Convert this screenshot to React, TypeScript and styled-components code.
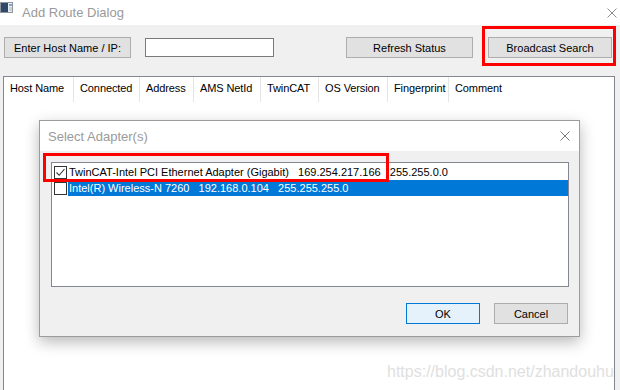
import React from "react";
import styled, { createGlobalStyle } from "styled-components";

const Global = createGlobalStyle`
  html, body { margin: 0; padding: 0; background: #ffffff; }
  body { font-family: "Liberation Sans", Arial, sans-serif; }
  * { box-sizing: border-box; }
`;

const Window = styled.div`
  position: relative;
  width: 620px;
  height: 390px;
  overflow: hidden;
  background: #f0f0f0;
  display: flex;
  flex-direction: column;
  font-family: "Liberation Sans", Arial, sans-serif;
  font-size: 11px;
  color: #000;
`;

const TitleBar = styled.div`
  height: 25px;
  flex-shrink: 0;
  background: #ffffff;
  display: flex;
  align-items: center;
`;

const AppIconSvg = styled.svg`
  align-self: flex-start;
  margin-top: 2px;
  flex-shrink: 0;
`;

const TitleText = styled.span`
  margin-left: 9px;
  font-size: 13px;
  color: #9a9a9a;
`;

const CloseIcon = styled.svg<{ $mr: number }>`
  margin-left: auto;
  margin-right: ${(p) => p.$mr}px;
  flex-shrink: 0;
`;

const Toolbar = styled.div`
  display: flex;
  align-items: center;
  height: 21px;
  margin-top: 12px;
  padding: 0 8px 0 4px;
  flex-shrink: 0;
`;

const Button = styled.button<{ $w: number; $primary?: boolean }>`
  width: ${(p) => p.$w}px;
  height: 21px;
  padding: 0;
  margin: 0;
  background: ${(p) => (p.$primary ? "#e5f1fb" : "#e1e1e1")};
  border: 1px solid ${(p) => (p.$primary ? "#0078d7" : "#adadad")};
  font-family: "Liberation Sans", Arial, sans-serif;
  font-size: 11px;
  color: #000;
  flex-shrink: 0;
`;

const TextInput = styled.input`
  width: 129px;
  height: 19px;
  margin-left: 14px;
  border: 1px solid #7a7a7a;
  background: #fff;
  padding: 0;
`;

const Spacer = styled.div`
  flex: 1;
`;

const Gap = styled.div<{ $w: number }>`
  width: ${(p) => p.$w}px;
  flex-shrink: 0;
`;

const Annotated = styled.div`
  position: relative;
  display: flex;
`;

const RedFrame = styled.div<{ $l: number; $t: number; $w: number; $h: number }>`
  position: absolute;
  left: ${(p) => p.$l}px;
  top: ${(p) => p.$t}px;
  width: ${(p) => p.$w}px;
  height: ${(p) => p.$h}px;
  border: 3px solid #ff0000;
  pointer-events: none;
  z-index: 5;
`;

const ListView = styled.div`
  margin: 18px 5px -4px 3px;
  flex: 1;
  background: #ffffff;
  border: 1px solid #828790;
  display: flex;
  flex-direction: column;
`;

const HeaderRow = styled.div`
  display: flex;
  height: 25px;
  background: #ffffff;
`;

const HeaderCell = styled.div<{ $w?: number; $last?: boolean }>`
  ${(p) => (p.$w ? `width: ${p.$w}px;` : "flex: 1;")}
  flex-shrink: 0;
  height: 25px;
  line-height: 23px;
  padding-left: 6px;
  border-right: ${(p) => (p.$last ? "none" : "1px solid #e5e5e5")};
  white-space: nowrap;
  letter-spacing: -0.1px;
`;

const Dialog = styled.div`
  position: absolute;
  left: 39px;
  top: 120px;
  width: 541px;
  height: 217px;
  border: 1px solid #9c9c9c;
  background: #f0f0f0;
  box-shadow: 0 5px 14px rgba(0, 0, 0, 0.28);
  display: flex;
  flex-direction: column;
  z-index: 3;
`;

const DialogTitle = styled.div`
  height: 30px;
  background: #ffffff;
  display: flex;
  align-items: center;
  padding-left: 8px;
  flex-shrink: 0;
`;

const DialogTitleText = styled.span`
  font-size: 13px;
  color: #9a9a9a;
`;

const DialogBody = styled.div`
  flex: 1;
  display: flex;
  flex-direction: column;
  padding: 11px 10px 12px 11px;
`;

const ListBox = styled.div`
  height: 125px;
  border: 1px solid #828790;
  background: #ffffff;
  padding-top: 1px;
  display: flex;
  flex-direction: column;
`;

const ItemRow = styled.div`
  display: flex;
  align-items: center;
  height: 16px;
  padding-left: 2px;
`;

const Check = styled.span`
  width: 13px;
  height: 13px;
  border: 1px solid #333333;
  background: #ffffff;
  flex-shrink: 0;
  display: flex;
  align-items: center;
  justify-content: center;
`;

const ItemLabel = styled.span<{ $selected?: boolean }>`
  flex: 1;
  height: 16px;
  line-height: 16px;
  margin-left: 1px;
  padding-left: 1px;
  white-space: pre;
  font-size: 11px;
  background: ${(p) => (p.$selected ? "#0078d7" : "transparent")};
  color: ${(p) => (p.$selected ? "#ffffff" : "#000000")};
`;

const ButtonRow = styled.div`
  display: flex;
  justify-content: flex-end;
  gap: 14px;
  margin-top: 16px;
  padding-right: 1px;
`;

const Watermark = styled.div`
  position: absolute;
  left: 387px;
  top: 364px;
  font-family: "Liberation Sans", Arial, sans-serif;
  font-size: 16px;
  line-height: 16px;
  color: #e0e0e0;
  white-space: nowrap;
  z-index: 4;
`;

const columns: { label: string; w?: number }[] = [
  { label: "Host Name", w: 70 },
  { label: "Connected", w: 66 },
  { label: "Address", w: 54 },
  { label: "AMS NetId", w: 67 },
  { label: "TwinCAT", w: 58 },
  { label: "OS Version", w: 69 },
  { label: "Fingerprint", w: 61 },
  { label: "Comment" },
];

const XIcon = ({ size, color, mr }: { size: number; color: string; mr: number }) => (
  <CloseIcon $mr={mr} width={size} height={size} viewBox={`0 0 ${size} ${size}`}>
    <path
      d={`M0.5 0.5 L${size - 0.5} ${size - 0.5} M${size - 0.5} 0.5 L0.5 ${size - 0.5}`}
      stroke={color}
      strokeWidth="1"
      fill="none"
    />
  </CloseIcon>
);

const AppIcon = () => (
  <AppIconSvg width="13" height="11" viewBox="0 0 13 11">
    <rect x="0.5" y="0.5" width="12" height="10" fill="#e9edf1" stroke="#8f969e" />
    <rect x="1" y="1" width="7" height="9" fill="#2e4a68" />
    <rect x="9" y="2" width="3" height="2" fill="#7fa8d0" />
    <rect x="9" y="5" width="3" height="4" fill="#c9d3dc" />
  </AppIconSvg>
);

export default function App() {
  return (
    <>
      <Global />
      <Window>
        <TitleBar>
          <AppIcon />
          <TitleText>Add Route Dialog</TitleText>
          <XIcon size={10} color="#8c8c8c" mr={3} />
        </TitleBar>

        <Toolbar>
          <Button $w={127}>Enter Host Name / IP:</Button>
          <TextInput />
          <Spacer />
          <Button $w={127}>Refresh Status</Button>
          <Gap $w={15} />
          <Annotated>
            <Button $w={124}>Broadcast Search</Button>
            <RedFrame $l={-6} $t={-11} $w={134} $h={40} />
          </Annotated>
        </Toolbar>

        <ListView>
          <HeaderRow>
            {columns.map((c, i) => (
              <HeaderCell key={c.label} $w={c.w} $last={i === columns.length - 1}>
                {c.label}
              </HeaderCell>
            ))}
          </HeaderRow>
        </ListView>

        <Dialog>
          <DialogTitle>
            <DialogTitleText>Select Adapter(s)</DialogTitleText>
            <XIcon size={10} color="#7a7a7a" mr={9} />
          </DialogTitle>
          <DialogBody>
            <ListBox>
              <ItemRow>
                <Check>
                  <svg width="11" height="11" viewBox="0 0 11 11">
                    <path d="M1.5 5.5 L4.2 8.3 L9.5 2" stroke="#333" strokeWidth="1.1" fill="none" />
                  </svg>
                </Check>
                <ItemLabel>
                  {"TwinCAT-Intel PCI Ethernet Adapter (Gigabit)   169.254.217.166   255.255.0.0"}
                </ItemLabel>
              </ItemRow>
              <ItemRow>
                <Check />
                <ItemLabel $selected>
                  {"Intel(R) Wireless-N 7260   192.168.0.104   255.255.255.0"}
                </ItemLabel>
              </ItemRow>
            </ListBox>
            <ButtonRow>
              <Button $w={74} $primary>
                OK
              </Button>
              <Button $w={74}>Cancel</Button>
            </ButtonRow>
          </DialogBody>
          <RedFrame $l={3} $t={32} $w={346} $h={29} />
        </Dialog>

        <Watermark>https://blog.csdn.net/zhandouhu</Watermark>
      </Window>
    </>
  );
}
